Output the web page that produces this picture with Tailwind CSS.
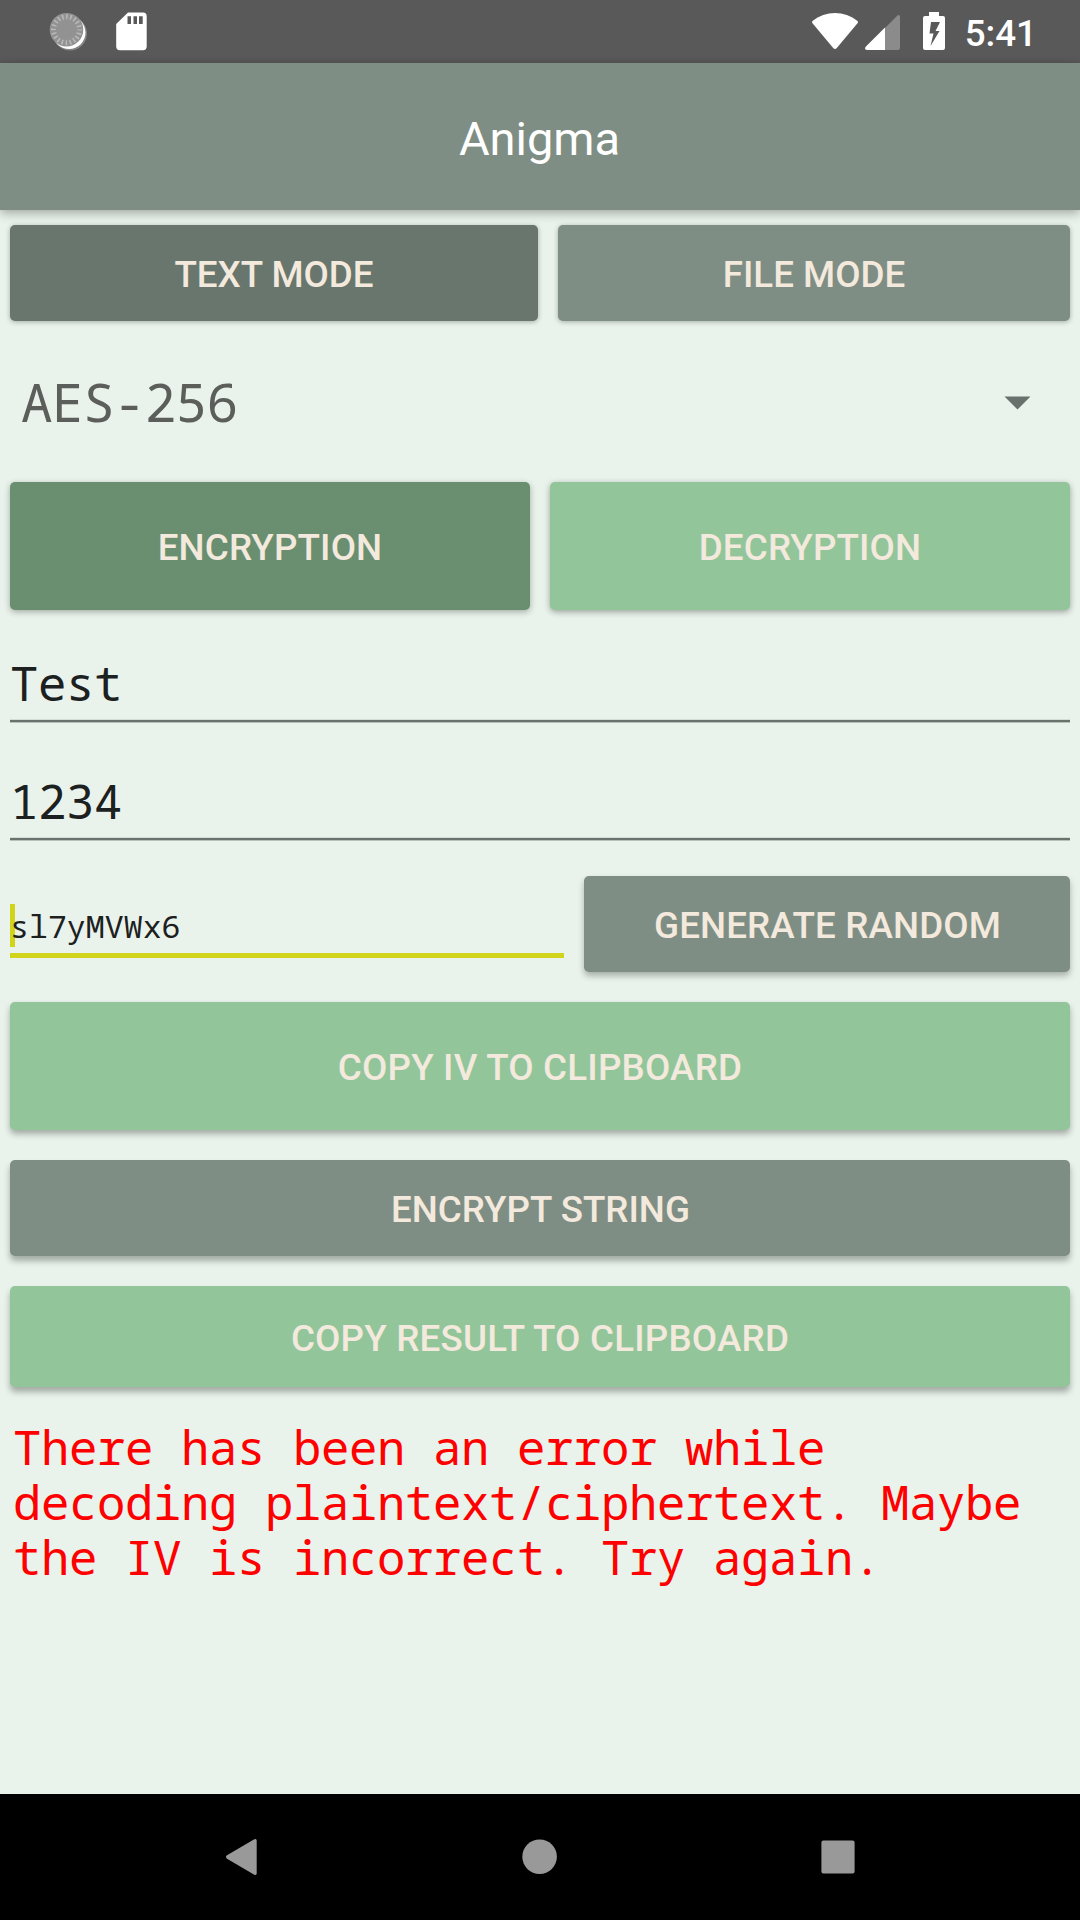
<!DOCTYPE html>
<html lang="en">
<head>
<meta charset="utf-8">
<title>Anigma</title>
<script src="https://cdn.jsdelivr.net/npm/@tailwindcss/browser@4"></script>
</head>
<body class="flex h-[1920px] w-[1080px] flex-col overflow-hidden bg-[#e9f3eb] font-['Roboto',sans-serif]">

  <!-- Status bar -->
  <header class="flex h-[63px] shrink-0 items-start bg-[#595959] text-white">
    <svg class="ml-[48px] mt-[10px] h-[42px] w-[42px]" viewBox="0 0 42 42">
      <circle cx="22" cy="23.500" r="17" fill="#858585"/>
      <circle cx="21" cy="22.500" r="16.500" fill="#fff"/>
      <circle cx="18.500" cy="19.700" r="16.800" fill="#929292"/>
      <circle cx="18.500" cy="19.700" r="13" fill="none" stroke="#b9b9b9" stroke-width="5" stroke-dasharray="1.500 2.584" stroke-dashoffset=".75"/>
    </svg>
    <svg class="ml-[26px] mt-[12px] h-[39px] w-[31px]" viewBox="0 0 31 39">
      <path fill="#fff" fill-rule="evenodd" d="M12 .5H27a3.700 3.700 0 0 1 3.700 3.700V34.600a3.700 3.700 0 0 1-3.700 3.700H3.900A3.700 3.700 0 0 1 .2 34.600V12ZM11.500 4.200V12H15V4.200ZM17.500 4.200V12H21V4.200ZM23 4.200V12H26.700V4.200Z"/>
    </svg>
    <div class="grow"></div>
    <svg class="mt-[12px] h-[39px] w-[48px]" viewBox="0 0 48 39">
      <path fill="#fff" d="M1.500 9C8 3.800 16 1 24 1s16 2.800 22.500 8q.9.900.2 2L25.800 35.900q-1.800 2-3.600 0L1.300 11q-.7-1.100.2-2Z"/>
    </svg>
    <svg class="ml-[6px] mt-[14px] h-[36px] w-[36px]" viewBox="0 0 36 36">
      <path fill="#8b8b8b" d="M32.500 1.400Q35 0 35 3V34q0 2-2 2H2Q-1 35.500 1 33Z"/>
      <path fill="#fff" d="M20 13.500V36H2Q-1 35.500.7 32.800Z"/>
    </svg>
    <svg class="ml-[21px] mt-[12px] h-[38px] w-[24px]" viewBox="0 0 24 38">
      <path fill="#fff" fill-rule="evenodd" d="M7 0H17V4H21a2 2 0 0 1 2 2V36a2 2 0 0 1-2 2H3a2 2 0 0 1-2-2V6A2 2 0 0 1 3 4H7ZM9 10 7.500 21.500H11.500L8.500 34 17.500 19H13.500L18 10Z"/>
    </svg>
    <span class="ml-[19px] mr-[43px] mt-[12px] text-[36.75px] leading-[43px] font-medium">5:41</span>
  </header>

  <!-- App bar -->
  <div class="z-10 flex h-[147px] shrink-0 items-center justify-center bg-[#7f8e84] pt-[4px] pr-[1px] shadow-[0_3px_10px_rgba(0,0,0,0.32)]">
    <h1 class="text-[47px] leading-[56px] text-white">Anigma</h1>
  </div>

  <main class="flex grow flex-col px-[10px] pt-[15px] text-[36.75px] font-medium text-[#f3e9dd]">
    <div class="flex gap-5">
      <button class="h-[96px] w-[528px] rounded-[5px] bg-[#69766d] pt-[3px] shadow-[0_1px_5px_rgba(0,0,0,0.3)]">TEXT MODE</button>
      <button class="h-[96px] grow rounded-[5px] bg-[#7f8e84] pt-[3px] shadow-[0_1px_5px_rgba(0,0,0,0.3)]">FILE MODE</button>
    </div>

    <!-- Cipher selector -->
    <div class="flex h-[161px] items-center justify-between pl-[11px] pr-[40px] font-['Noto_Sans_Mono','DejaVu_Sans_Mono',monospace] text-[52.500px] tracking-[-0.55px] font-normal text-[#5c5e5c]">
      <span class="pt-[1px] leading-[60px]">AES-256</span>
      <svg class="mt-[2px] h-[14px] w-[26px]" viewBox="0 0 26 14"><path fill="#69716c" d="M.5 .500H26.500L13.500 13.500Z"/></svg>
    </div>

    <div class="flex gap-5">
      <button class="h-[128px] w-[520px] rounded-[5px] bg-[#698f70] pt-[3px] tracking-[0.15px] shadow-[0_2px_6px_rgba(0,0,0,0.3)]">ENCRYPTION</button>
      <button class="h-[128px] w-[520px] rounded-[5px] bg-[#92c59a] pt-[3px] tracking-[0.15px] shadow-[0_2px_6px_rgba(0,0,0,0.34)]">DECRYPTION</button>
    </div>

    <!-- Inputs -->
    <div class="mt-[47px] h-[65px] border-b-2 border-[#69726c] font-['Noto_Sans_Mono','DejaVu_Sans_Mono',monospace] text-[47.25px] leading-[52px] tracking-[-0.35px] font-normal text-[#1c201e] shadow-[0_1px_0_#b7c0b9,inset_0_-1px_0_#d3dcd5]">Test</div>
    <div class="mt-[53px] h-[65px] border-b-2 border-[#69726c] font-['Noto_Sans_Mono','DejaVu_Sans_Mono',monospace] text-[47.25px] leading-[52px] tracking-[-0.35px] font-normal text-[#1c201e] shadow-[0_1px_0_#b7c0b9,inset_0_-1px_0_#d3dcd5]">1234</div>

    <div class="mt-[36px] flex h-[96px] gap-5">
      <div class="relative mt-[28px] h-[54px] w-[554px] border-b-[5px] border-[#d0d41b] font-['Noto_Sans_Mono','DejaVu_Sans_Mono',monospace] text-[31.500px] leading-[44px] tracking-[0.05px] font-normal text-[#1c201e]">
        <span class="absolute left-0 top-0 h-[43px] w-[5px] bg-[#d0d41b]"></span>
        <span class="relative">sl7yMVWx6</span>
      </div>
      <button class="h-[96px] grow rounded-[5px] bg-[#7f8e84] pt-[3px] pl-[1px] tracking-[0.12px] shadow-[0_4px_6px_rgba(0,0,0,0.28)]">GENERATE RANDOM</button>
    </div>

    <button class="mt-[30px] h-[128px] rounded-[5px] bg-[#92c59a] pt-[3px] tracking-[0.2px] shadow-[0_4px_6px_rgba(0,0,0,0.3)]">COPY IV TO CLIPBOARD</button>
    <button class="mt-[30px] h-[96px] rounded-[5px] bg-[#7f8e84] pt-[3px] pl-[1px] shadow-[0_5px_6px_rgba(0,0,0,0.3)]">ENCRYPT STRING</button>
    <button class="mt-[30px] h-[101px] rounded-[5px] bg-[#92c59a] pt-[4px] tracking-[0.2px] shadow-[0_5px_6px_rgba(0,0,0,0.3)]">COPY RESULT TO CLIPBOARD</button>

    <p class="mt-[32px] pl-[3px] font-['Noto_Sans_Mono','DejaVu_Sans_Mono',monospace] text-[47.25px] leading-[55px] tracking-[-0.35px] font-normal text-[#ff0000]">There has been an error while<br>decoding plaintext/ciphertext. Maybe<br>the IV is incorrect. Try again.</p>
  </main>

  <!-- Navigation bar -->
  <nav class="flex h-[126px] shrink-0 items-center bg-black pl-[225px]">
    <svg class="h-[38px] w-[33px]" viewBox="0 0 33 38"><path fill="#999" d="M29.300 1.300Q31.700.200 31.700 2.800V35.200q0 2.600-2.400 1.500L2 20.700q-2.200-1.700 0-3.400Z"/></svg>
    <svg class="ml-[264px] h-[36px] w-[36px]" viewBox="0 0 36 36"><circle cx="17.600" cy="17.700" r="17.300" fill="#999"/></svg>
    <svg class="ml-[263px] h-[34px] w-[34px]" viewBox="0 0 34 34"><rect x=".4" y=".4" width="33.200" height="33.200" rx="2" fill="#999"/></svg>
  </nav>
</body>
</html>
